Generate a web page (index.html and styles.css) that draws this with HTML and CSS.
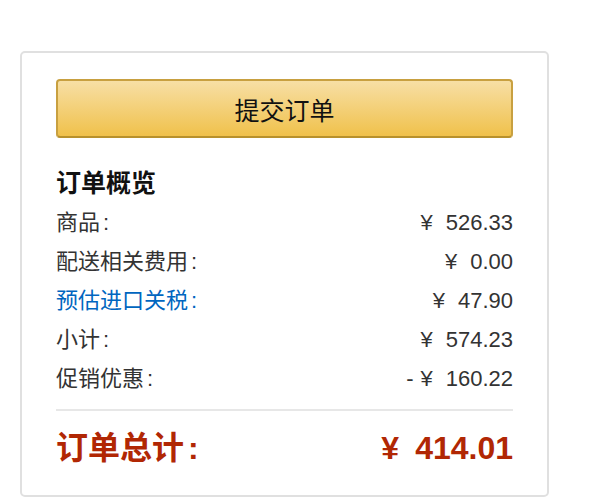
FILE: index.html
```html
<!DOCTYPE html>
<html lang="zh-CN">
<head>
  <meta charset="UTF-8">
  <title>订单概览</title>
  <link rel="stylesheet" href="styles.css">
</head>
<body>
  <div class="order-box">
    <button class="submit-btn">提交订单</button>

    <h3 class="summary-title">订单概览</h3>
    <div class="summary-row"><span>商品<i class="colon">:</i></span><span><i class="cur">¥</i>526.33</span></div>
    <div class="summary-row"><span>配送相关费用<i class="colon">:</i></span><span><i class="cur">¥</i>0.00</span></div>
    <div class="summary-row"><a href="#" class="link">预估进口关税<i class="colon">:</i></a><span><i class="cur">¥</i>47.90</span></div>
    <div class="summary-row"><span>小计<i class="colon">:</i></span><span><i class="cur">¥</i>574.23</span></div>
    <div class="summary-row"><span>促销优惠<i class="colon">:</i></span><span><i class="minus">-</i><i class="cur">¥</i>160.22</span></div>

    <div class="total-row"><span>订单总计<i class="colon">:</i></span><span><i class="cur">¥</i>414.01</span></div>
  </div>
</body>
</html>
```

FILE: styles.css
```css
* { box-sizing: border-box; margin: 0; padding: 0; }
body {
  font-family: "Liberation Sans", Arial, "Noto Sans CJK SC", sans-serif;
  background: #ffffff;
  color: #333333;
  padding: 51px 51px 0 20px;
}
i { font-style: normal; }
.order-box {
  width: 529px;
  height: 446px;
  border: 2px solid #e0e0e0;
  border-radius: 5px;
  padding: 26px 34px 0 34px;
}
.submit-btn {
  display: block;
  width: 100%;
  height: 59px;
  font-family: inherit;
  font-size: 25px;
  color: #111111;
  background: linear-gradient(to bottom, #f7dfa5, #f0c14b);
  border: 2px solid #c8a040;
  border-bottom-color: #b8912c;
  border-radius: 4px;
  cursor: pointer;
}
.summary-title {
  font-size: 25px;
  font-weight: 700;
  line-height: 39px;
  margin-top: 26px;
  color: #111111;
}
.summary-row {
  display: flex;
  justify-content: space-between;
  font-size: 22px;
  line-height: 39px;
}
.summary-row .link { color: #0066c0; text-decoration: none; }
.colon { margin-left: 3px; }
.cur { margin-right: 13px; }
.minus { margin-right: 7px; }
.total-row {
  display: flex;
  justify-content: space-between;
  border-top: 2px solid #e7e7e7;
  margin-top: 11px;
  padding-top: 12px;
  font-size: 32px;
  font-weight: 700;
  line-height: 50px;
  color: #b12704;
}
.total-row .cur { margin-right: 16px; }
.total-row .colon { margin-left: 4px; }
```
